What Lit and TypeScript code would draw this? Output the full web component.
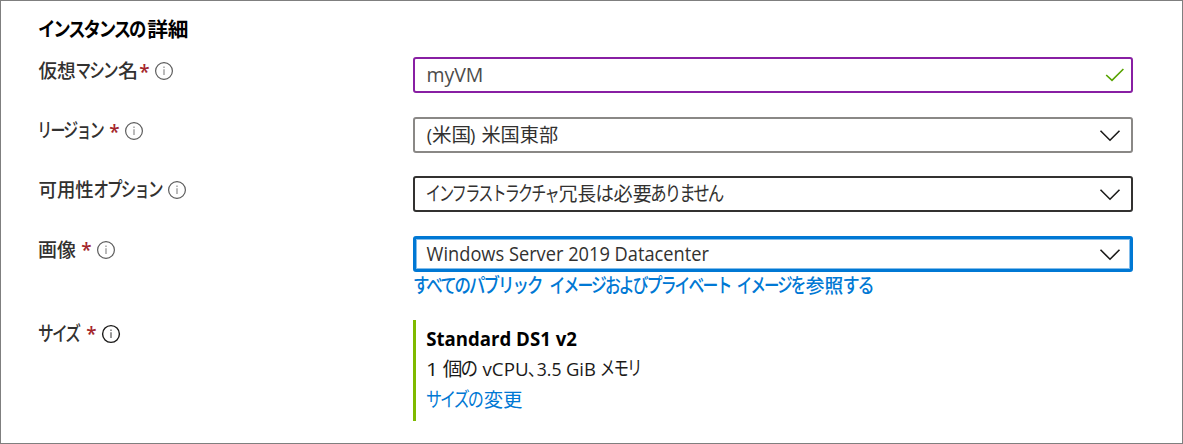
import { LitElement, html, svg, css } from "lit";
import { customElement, property } from "lit/decorators.js";

const JP = '"Noto Sans CJK JP", sans-serif';
const LATIN = '"Open Sans", "Noto Sans", sans-serif';

/** A run of text: its content, the left and right edge of its ink, and optional overrides. */
interface Run {
  t: string;
  a: number;
  b: number;
  latin?: boolean;
  size?: number;
  track?: number;
  weight?: number;
  cls?: string;
  dy?: number;
}

const ctx = document.createElement("canvas").getContext("2d") as any;

@customElement("text-line")
export class TextLine extends LitElement {
  static styles = css`
    :host { display: block; }
    svg { display: block; overflow: visible; }
    text { fill: currentColor; white-space: pre; }
    .req { fill: #a4262c; }
    .half { font-feature-settings: "halt"; }
  `;
  @property({ attribute: false }) runs: Run[] = [];
  @property({ type: Number }) size = 19;
  @property({ type: Number }) weight = 400;
  @property({ type: Number }) baseline = 20;
  @property({ type: Number }) height = 26;

  private run(r: Run) {
    const size = r.size ?? this.size;
    const weight = r.weight ?? this.weight;
    const family = r.latin ? LATIN : JP;
    const track = r.track ?? 0;
    // Measured at ten times the size so that rounding of the ink box does not matter.
    ctx.font = `${weight} ${size * 10}px ${family}`;
    ctx.letterSpacing = `${track * 10}px`;
    const m = ctx.measureText(r.t);
    const left = m.actualBoundingBoxLeft / 10;
    const right = m.actualBoundingBoxRight / 10;
    const k = (r.b - r.a) / (right + left);
    const x = r.a + left * k;
    return svg`<text class=${r.cls ?? ""} transform="translate(${x} ${this.baseline + (r.dy ?? 0)}) scale(${k} 1)"
      font-family=${family} font-size=${size} font-weight=${weight} letter-spacing=${track}>${r.t}</text>`;
  }

  render() {
    const w = Math.max(...this.runs.map((r) => r.b));
    return html`<svg width=${w} height=${this.height}>${this.runs.map((r) => this.run(r))}</svg>`;
  }
}

const line = (runs: Run[], size: number, weight: number, baseline: number, height: number, cls = "") =>
  html`<text-line class=${cls} .runs=${runs} .size=${size} .weight=${weight} .baseline=${baseline} .height=${height}></text-line>`;

const info = (strong = false) => html`
  <svg class="info ${strong ? "strong" : ""}" width="20" height="20" viewBox="0 0 20 20">
    <circle cx="10" cy="10" r="8.4" />
    <path d="M10 8.2V14M10 5.6V7" />
  </svg>`;

const chevron = html`<svg class="chevron" width="22" height="14" viewBox="0 0 22 14"><path d="M1.5 1.8L11 11.2L20.5 1.8" /></svg>`;
const check = html`<svg class="check" width="20" height="14" viewBox="0 0 20 14"><path d="M1.2 7L7 12.4L18.4 1" /></svg>`;

const star = (a: number): Run => ({ t: "*", a, b: a + 9, latin: true, weight: 600, size: 19.5, cls: "req", dy: 0.5 });
const kana = (t: string, a: number, b: number): Run => ({ t, a, b, track: -2.4, size: 20 });

@customElement("app-root")
export class AppRoot extends LitElement {
  static styles = css`
    :host { display: block; }
    .panel {
      box-sizing: border-box; width: 1183px; height: 444px; background: #fff;
      border: 1px solid #7f7f7f; padding: 15px 0 0 37px; overflow: hidden;
    }
    .title { color: #000; height: 41px; }
    .row { display: grid; grid-template-columns: 375px 720px; align-items: start; }
    .r1, .r3 { height: 60px; }
    .r2 { height: 59px; }
    .r4 { height: 84px; }
    .label { display: flex; color: #323130; }
    .info { margin: 3.5px 0 0 5px; fill: none; }
    .r3 .info { margin-left: 4px; }
    .info circle { stroke: #5c5c5c; stroke-width: 1.2; }
    .info path { stroke: #8c8c8c; stroke-width: 1.2; }
    .strong circle { stroke: #1b1a19; stroke-width: 1.4; }
    .strong path { stroke: #555; }
    .field {
      box-sizing: border-box; height: 36px; border: 2px solid #8a8886; border-radius: 3px;
      display: flex; align-items: center; justify-content: space-between;
      color: #323130; padding: 0 10px 0 11px;
    }
    .field.valid { border-color: #881fa3; padding-right: 6px; color: #4c4b4a; }
    .field.dark { border-color: #323130; }
    .field.focus { border: 3px solid #0078d4; box-shadow: inset 0 0 0 1px #83bdeb; padding: 0 9px 0 10px; }
    .chevron { fill: none; stroke: #1b1a19; stroke-width: 1.6; margin-top: 1px; }
    .check { fill: none; stroke: #57a300; stroke-width: 1.6; }
    .link { color: #0078d4; }
    .size { box-sizing: border-box; height: 101px; border-left: 3px solid #7fba00; padding: 4px 0 0 10px; }
    .strongtext { color: #000; }
    .plain { color: #1b1a19; }
  `;

  render() {
    return html`
      <div class="panel">
        <div class="title">${line([
          kana("インスタンスの", 1, 108),
          { t: "詳細", a: 109.7, b: 149.3 },
        ], 20, 600, 21.3, 30)}</div>

        <div class="row r1">
          <div class="label">${line([
            { t: "仮想", a: 0.7, b: 37 },
            kana("マシン", 39, 79.5),
            { t: "名", a: 80.5, b: 98 },
            star(102),
          ], 19, 500, 21, 36)}${info()}</div>
          <div class="field valid">${line([{ t: "myVM", a: 2, b: 55.5, latin: true, size: 19.5 }], 19, 400, 19.6, 26)}${check}</div>
        </div>

        <div class="row r2">
          <div class="label">${line([
            kana("リージョン", 2.3, 66),
            star(72),
          ], 19, 500, 21, 36)}${info()}</div>
          <div class="field">${line([
            { t: "(", a: 1.3, b: 5.5, latin: true },
            { t: "米国", a: 6.5, b: 43.5 },
            { t: ")", a: 44.5, b: 48.7, latin: true },
            { t: "米国東部", a: 56, b: 131.5 },
          ], 19, 370, 19.5, 26)}${chevron}</div>
        </div>

        <div class="row r3">
          <div class="label">${line([
            { t: "可用性", a: 1.4, b: 55 },
            kana("オプション", 56.5, 124.5),
          ], 19, 500, 20.7, 36)}${info()}</div>
          <div class="field dark">${line([
            kana("インフラストラクチャ", 1, 132.5),
            { t: "冗長", a: 133.5, b: 169.5 },
            kana("は", 171.5, 187),
            { t: "必要", a: 188, b: 225 },
            kana("ありません", 226, 298),
          ], 19, 370, 19.7, 26)}${chevron}</div>
        </div>

        <div class="row r4">
          <div class="label">${line([
            { t: "画像", a: 1, b: 37.5 },
            star(44),
          ], 19, 500, 20.5, 36)}${info()}</div>
          <div>
            <div class="field focus">${line([
              { t: "Windows Server 2019 Datacenter", a: 0.8, b: 282.8, latin: true },
            ], 19.5, 400, 19.8, 26)}${chevron}</div>
            ${line([
              kana("すべてのパブリック", 1.5, 130.5),
              kana("イメージおよびプライベート", 137.7, 317.5),
              kana("イメージを", 325, 392),
              { t: "参照", a: 393, b: 429.5 },
              kana("する", 431, 459.5),
            ], 19, 500, 20.7, 26, "link")}
          </div>
        </div>

        <div class="row">
          <div class="label">${line([
            kana("サイズ", 1, 43),
            star(49),
          ], 19, 500, 20.6, 36)}${info(true)}</div>
          <div class="size">
            ${line([{ t: "Standard DS1 v2", a: 0.9, b: 150.5, latin: true }], 19.5, 700, 21.8, 30, "strongtext")}
            ${line([
              { t: "1", a: 2, b: 7.6, latin: true, weight: 400 },
              { t: "個", a: 17, b: 35 },
              kana("の", 36, 50.5),
              { t: "vCPU", a: 56.5, b: 101, latin: true, weight: 400 },
              { t: "、", a: 102.5, b: 107.5, size: 18, cls: "half" },
              { t: "3.5", a: 111.5, b: 134.5, latin: true, weight: 400 },
              { t: "GiB", a: 141, b: 169, latin: true, weight: 400 },
              kana("メモリ", 175.5, 213),
            ], 19, 370, 22.4, 30, "plain")}
            ${line([
              kana("サイズの", 1, 57),
              { t: "変更", a: 58.5, b: 96 },
            ], 19, 370, 22.5, 30, "link")}
          </div>
        </div>
      </div>
    `;
  }
}
